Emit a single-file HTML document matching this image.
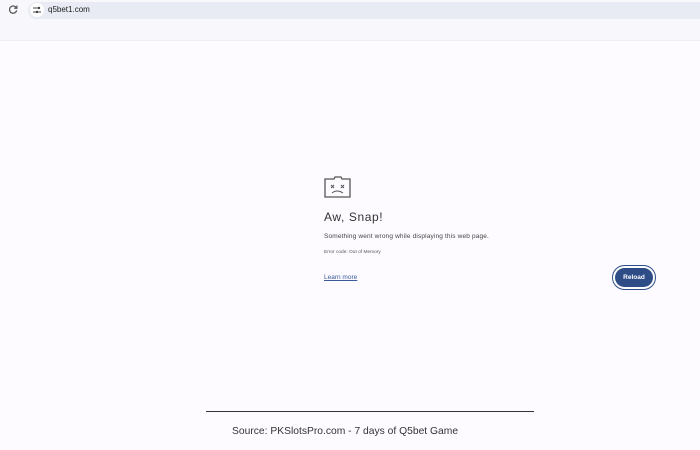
<!DOCTYPE html>
<html><head><style>
*{margin:0;padding:0;box-sizing:border-box}
body{width:700px;height:450px;background:#fdfbff;font-family:"Liberation Sans",sans-serif;position:relative;overflow:hidden}
.bar{position:absolute;left:0;top:0;width:700px;height:41px;background:#f8f8fc;border-bottom:1px solid #ececf2}
.url{position:absolute;left:28px;top:2px;width:672px;height:17px;background:#e8ebf3;border-radius:9px 0 0 9px}
.abs{position:absolute;white-space:nowrap}
</style></head><body>
<div class="bar"></div>
<div class="url"></div>
<svg class="abs" style="left:9px;top:5px" width="9" height="9" viewBox="0 0 10 10"><path d="M8 3A4 4 0 1 0 8.5 6" fill="none" stroke="#555" stroke-width="1.4"/><path d="M8.8 0.5V3.6H5.8" fill="none" stroke="#555" stroke-width="1.3"/></svg>
<div class="abs" style="left:30px;top:3px;width:14px;height:14px;border-radius:7px;background:#fff"></div>
<svg class="abs" style="left:33px;top:6px" width="8" height="8" viewBox="0 0 8 8"><path d="M0 2H5M0 6H3M5 6H8" stroke="#444" stroke-width="1"/><circle cx="6" cy="2" r="1.2" fill="#444"/><circle cx="4" cy="6" r="1.2" fill="#444"/></svg>
<div class="abs" style="left:48px;top:5px;font-size:8px;color:#222">q5bet1.com</div>
<svg class="abs" style="left:324px;top:176px" width="27" height="22" viewBox="0 0 27 22"><path d="M1 3H10L11 1H17L18 3H26V21H1Z" fill="none" stroke="#555" stroke-width="1.3"/><path d="M7 9l3 3M10 9l-3 3M17 9l3 3M20 9l-3 3M8 17Q13 13 19 17" fill="none" stroke="#555" stroke-width="1"/></svg>
<div class="abs" style="left:324px;top:210px;font-size:12px;letter-spacing:0.6px;color:#333">Aw, Snap!</div>
<div class="abs" style="left:324px;top:233px;font-size:6.5px;letter-spacing:0.15px;color:#444">Something went wrong while displaying this web page.</div>
<div class="abs" style="left:324px;top:250px;font-size:4.8px;color:#555">Error code: Out of Memory</div>
<div class="abs" style="left:324px;top:274px;font-size:6.5px;color:#3b5a9a;text-decoration:underline">Learn more</div>
<div class="abs" style="left:612px;top:265px;width:44px;height:25px;border-radius:13px;border:1.5px solid #2e4c86;background:#fff"></div>
<div class="abs" style="left:615px;top:268px;width:38px;height:19px;border-radius:10px;background:#2e4c86;color:#fff;font-size:6.5px;font-weight:bold;text-align:center;line-height:19px">Reload</div>
<div class="abs" style="left:206px;top:411px;width:328px;height:1px;background:#333"></div>
<div class="abs" style="left:232px;top:426px;font-size:10.3px;color:#333">Source: PKSlotsPro.com - 7 days of Q5bet Game</div>
</body></html>
